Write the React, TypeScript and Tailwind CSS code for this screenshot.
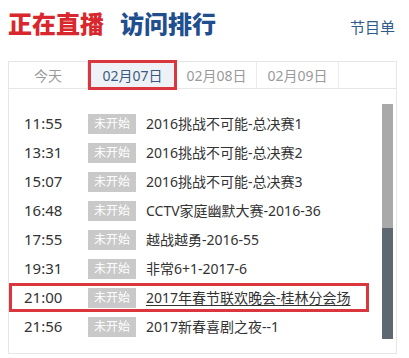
const TABS = [
  { label: '今天', w: 'w-[79px]' },
  { label: '02月07日', w: 'w-[89px]', active: true },
  { label: '02月08日', w: 'w-[80px]' },
  { label: '02月09日', w: 'w-[82px]' },
]

const PROGRAMS = [
  { time: '11:55', title: '2016挑战不可能-总决赛1' },
  { time: '13:31', title: '2016挑战不可能-总决赛2' },
  { time: '15:07', title: '2016挑战不可能-总决赛3' },
  { time: '16:48', title: 'CCTV家庭幽默大赛-2016-36' },
  { time: '17:55', title: '越战越勇-2016-55' },
  { time: '19:31', title: '非常6+1-2017-6' },
  { time: '21:00', title: '2017年春节联欢晚会-桂林分会场', marked: true },
  { time: '21:56', title: '2017新春喜剧之夜--1' },
]

export default function App() {
  return (
    <div className="w-[409px] h-[358px] bg-white overflow-hidden font-['Noto_Sans','Noto_Sans_CJK_SC',sans-serif] text-[#333]">
      {/* 标题栏 */}
      <div className="flex items-end pl-[8px] pr-[14px] pt-[8px] h-[38px]">
        <span className="text-[24px] leading-[28px] font-black text-[#d9272e]">正在直播</span>
        <span className="ml-[16px] text-[24px] leading-[28px] font-black text-[#1f4f8f]">访问排行</span>
        <span className="ml-auto text-[15px] leading-[20px] text-[#2e5a8c] mb-[1px]">节目单</span>
      </div>

      <div className="mt-[23px] ml-[8px] w-[389px] h-[293px] border border-[#e6e6e6] flex flex-col">
        {/* 日期标签 */}
        <div className="flex h-[27px] border-b border-[#e6e6e6] shrink-0">
          {TABS.map((tab) =>
            tab.active ? (
              <div
                key={tab.label}
                className={`${tab.w} h-[30px] -mt-[2px] border-[3px] border-[#d9363e] bg-[#eef2f6] flex items-center justify-center text-[14px] text-[#3b5a80]`}
              >
                {tab.label}
              </div>
            ) : (
              <div
                key={tab.label}
                className={`${tab.w} border-r border-[#ececec] flex items-center justify-center text-[14px] text-[#9a9a9a]`}
              >
                {tab.label}
              </div>
            )
          )}
        </div>

        {/* 节目列表 */}
        <div className="flex flex-1">
          <div className="w-[360px] pt-[20px]">
            {PROGRAMS.map((p) => (
              <div
                key={p.time}
                className={`flex items-center h-[29px] pl-[15px] ${p.marked ? 'outline-3 outline-[#d9363e] -outline-offset-3' : ''}`}
              >
                <span className="w-[64px] text-[15px] text-[#333]">{p.time}</span>
                <span className="w-[48px] h-[20px] bg-[#c9c9c9] text-white text-[12px] flex items-center justify-center">
                  未开始
                </span>
                <span className={`ml-[10px] text-[14px] text-[#333] ${p.marked ? 'underline underline-offset-2' : ''}`}>
                  {p.title}
                </span>
              </div>
            ))}
          </div>
          {/* 滚动条 */}
          <div className="ml-[13px] mt-[15px] w-[11px] h-[235px] flex flex-col">
            <div className="h-[124px] bg-[#a9a9a9]" />
            <div className="flex-1 bg-[#5f6771]" />
          </div>
        </div>
      </div>
    </div>
  )
}
